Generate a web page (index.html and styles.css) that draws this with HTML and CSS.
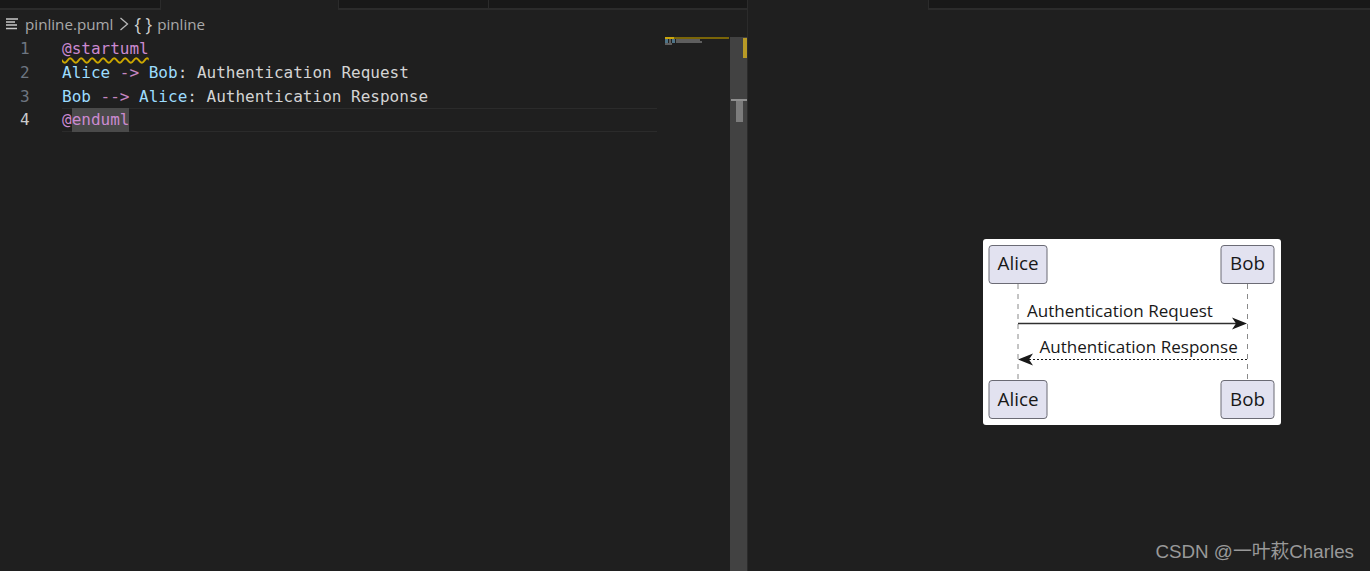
FILE: index.html
```html
<!DOCTYPE html>
<html lang="en">
<head>
<meta charset="utf-8">
<title>pinline.puml</title>
<link rel="stylesheet" href="styles.css">
</head>
<body>
<div class="workbench">
  <section class="pane pane-left">
    <div class="tabbar">
      <div class="tab tab-a"></div>
      <div class="tab tab-active tab-b"></div>
      <div class="tab tab-c"></div>
      <div class="tab tab-fill"></div>
    </div>
    <div class="crumbs">
      <svg class="crumb-file" width="14" height="12" viewBox="0 0 14 12"><path d="M0 1h12M0 4h9M0 7h11M0 10.500h11" stroke="#c8c8c8" stroke-width="1.500" fill="none"/></svg>
      <span class="crumb-text">pinline.puml</span>
      <svg class="crumb-sep" width="10" height="14" viewBox="0 0 10 14"><path d="M1.500 1L8.500 7l-7 6" stroke="#b8b8b8" stroke-width="1.300" fill="none"/></svg>
      <span class="crumb-braces">{ }</span>
      <span class="crumb-text">pinline</span>
    </div>
    <div class="editor">
      <div class="gutter">
        <div class="ln">1</div>
        <div class="ln">2</div>
        <div class="ln">3</div>
        <div class="ln ln-active">4</div>
      </div>
      <div class="code">
        <div class="line"><span class="kw squiggle">@startuml</span></div>
        <div class="line"><span class="id">Alice</span> <span class="arrow">-&gt;</span> <span class="id">Bob</span>: Authentication Request</div>
        <div class="line"><span class="id">Bob</span> <span class="arrow">--&gt;</span> <span class="id">Alice</span>: Authentication Response</div>
        <div class="line line-current"><span class="kw">@<span class="sel">enduml</span></span></div>
      </div>
      <div class="minimap">
        <div class="mm-warn"></div>
        <div class="mm-row"><i class="mm-b mm-w2"></i><i class="mm-g mm-w6"></i><i class="mm-b mm-w2"></i><i class="mm-g mm-w3"></i></div>
        <div class="mm-row"><i class="mm-b mm-w2"></i><i class="mm-g mm-w6"></i><i class="mm-b mm-w2"></i><i class="mm-g mm-w4"></i></div>
        <div class="mm-row"><i class="mm-g mm-w5"></i></div>
      </div>
      <div class="scrollbar">
        <div class="sb-mark"></div>
        <div class="sb-cap"></div>
        <div class="sb-stem"></div>
      </div>
    </div>
  </section>
  <section class="pane pane-right">
    <div class="tabbar">
      <div class="tab tab-active tab-d"></div>
      <div class="tab tab-fill tab-fill-r"></div>
    </div>
    <div class="preview">
      <svg class="diagram" width="298" height="186" viewBox="0 0 298 186">
        <rect width="298" height="186" rx="3" fill="#fff"/>
        <path class="life" d="M35 45V141M264.500 45V141"/>
        <rect class="actor" x="6" y="6.500" width="58" height="38" rx="3"/>
        <rect class="actor" x="238" y="6.500" width="53" height="38" rx="3"/>
        <rect class="actor" x="6" y="141.500" width="58" height="38" rx="3"/>
        <rect class="actor" x="238" y="141.500" width="53" height="38" rx="3"/>
        <text class="name" x="35" y="31">Alice</text>
        <text class="name" x="264.500" y="31">Bob</text>
        <text class="name" x="35" y="167">Alice</text>
        <text class="name" x="264.500" y="167">Bob</text>
        <text class="msg" x="44" y="78">Authentication Request</text>
        <text class="msg" x="56.500" y="114">Authentication Response</text>
        <path class="solid" d="M35 84.500H256"/>
        <path class="head" d="M249 78.500L264 84.500L249 90.500L253 84.500Z"/>
        <path class="dash" d="M264 120.500H42"/>
        <path class="head" d="M50 114.500L35 120.500L50 126.500L46 120.500Z"/>
      </svg>
    </div>
    <div class="watermark">CSDN @一叶萩Charles</div>
  </section>
</div>
</body>
</html>
```
FILE: styles.css
```css
* { box-sizing: border-box; }
html, body { margin: 0; height: 100%; background: #1f1f1f; overflow: hidden; }
.workbench { display: flex; height: 571px; }
.pane { display: flex; flex-direction: column; }
.pane-left { width: 748px; border-right: 1px solid #2b2b2b; }
.pane-right { flex: 1; position: relative; }

.tabbar { display: flex; height: 10px; flex: none; }
.tab { background: #181818; border-bottom: 2px solid #2b2b2b; }
.tab-active { background: #1f1f1f; border-bottom: none; }
.tab-a { width: 161px; border-right: 1px solid #2b2b2b; }
.tab-b { width: 177px; }
.tab-c { width: 151px; border-left: 1px solid #2b2b2b; border-right: 1px solid #2b2b2b; }
.tab-fill { flex: 1; }
.tab-d { width: 180px; }
.tab-fill-r { border-left: 1px solid #2b2b2b; }

.crumbs { display: flex; align-items: center; height: 27px; padding: 0 0 0 6px; flex: none;
  font-family: "Open Sans", "Noto Sans", sans-serif; font-size: 15.200px; color: #a9a9a9; }
.crumb-file { margin-right: 5px; }
.crumb-sep { margin: 0 5px 0 6px; }
.crumb-braces { color: #d0d0d0; margin-right: 5px; font-size: 17.500px; white-space: pre; }

.editor { display: flex; flex: 1; min-height: 0; }
.gutter { width: 62px; flex: none; font-family: "DejaVu Sans Mono", monospace; font-size: 16px; color: #6e7681; }
.ln { height: 23.800px; line-height: 23.800px; padding-left: 20px; }
.ln-active { color: #ccc; }
.code { width: 595px; flex: none; font-family: "DejaVu Sans Mono", monospace; font-size: 16px; color: #d4d4d4; }
.line { height: 23.800px; line-height: 23.800px; white-space: pre; }
.line-current { box-shadow: inset 0 1px 0 #2b2b2b, inset 0 -1px 0 #2b2b2b; }
.id { color: #9cdcfe; }
.kw { color: #cb8ad0; }
.arrow { color: #c586c0; }
.squiggle { text-decoration: underline wavy #cca700 1.500px; text-underline-offset: 3px; }
.sel { background: #4a4a4a; display: inline-block; height: 23.800px; }

.minimap { width: 73px; flex: none; padding: 0 1px 0 8px; }
.mm-warn { height: 2px; width: 64px; background: #7a6508; border-left: 9px solid #c9a50c; }
.mm-row { display: flex; gap: 1px; height: 2px; }
.mm-row i { display: block; height: 2px; }
.mm-b { background: #4f7488; }
.mm-g { background: #5e5e5e; }
.mm-w2 { width: 3px; }
.mm-w3 { width: 24px; }
.mm-w4 { width: 26px; }
.mm-w5 { width: 7px; }
.mm-w6 { width: 2px; }

.scrollbar { width: 17px; flex: none; background: #424242; display: flex; flex-direction: column; align-items: flex-end; }
.sb-mark { width: 4px; height: 20px; margin-top: 1px; background: #b89a26; }
.sb-cap { width: 16px; height: 2px; margin-top: 41px; background: #8f8f8f; }
.sb-stem { width: 7px; height: 21px; margin-right: 4px; background: #7c7c7c; }

.preview { padding: 229px 0 0 235px; }
.diagram { display: block; }
.actor { fill: #e2e2f0; stroke: #6b6b75; stroke-width: 1; }
.life { stroke: #8a8a8a; stroke-width: 1; stroke-dasharray: 5 5; fill: none; }
.name { font-family: "Open Sans", "Noto Sans", sans-serif; font-size: 18.800px; fill: #181818; text-anchor: middle; }
.msg { font-family: "Open Sans", "Noto Sans", sans-serif; font-size: 17.050px; fill: #181818; }
.solid { stroke: #303030; stroke-width: 1.500; fill: none; }
.dash { stroke: #181818; stroke-width: 1; stroke-dasharray: 2 2; fill: none; }
.head { fill: #181818; }

.watermark { position: absolute; right: 16px; bottom: 8px; font-family: "Liberation Sans", "Noto Sans CJK SC", sans-serif; font-size: 18.800px; color: #999; }
```
